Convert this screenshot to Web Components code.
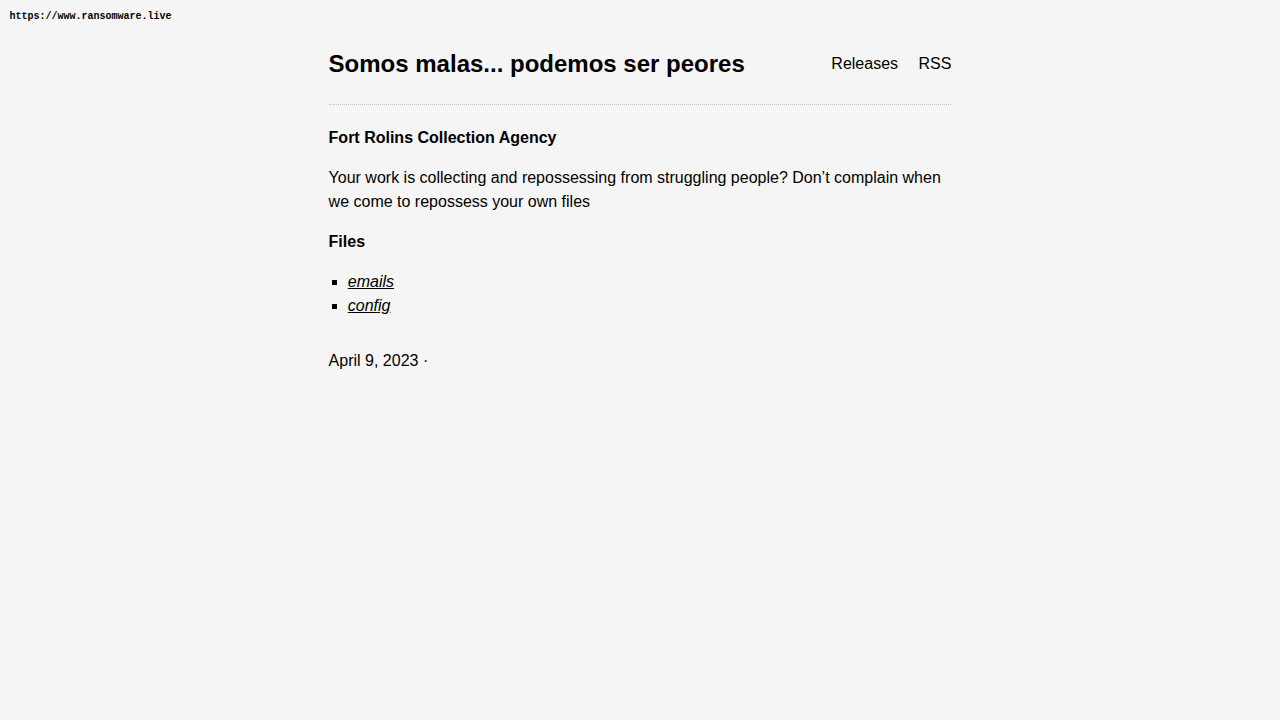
<!DOCTYPE html>
<html lang="en">
<head>
<meta charset="utf-8">
<title>Fort Rolins Collection Agency</title>
<style>
html,body{margin:0;background:#f5f5f5;color:#000}
body{font:16px/24px "Liberation Sans",Arial,sans-serif}
</style>
</head>
<body>
<source-mark>https://www.ransomware.live</source-mark>
<page-shell>
<site-header slot="header" heading="Somos malas... podemos ser peores"><nav-link>Releases</nav-link><nav-link>RSS</nav-link></site-header>
<release-post heading="Fort Rolins Collection Agency">Your work is collecting and repossessing from struggling people? Don’t complain when we come to repossess your own files<file-link slot="files">emails</file-link><file-link slot="files">config</file-link><span slot="date">April 9, 2023 ·</span></release-post>
</page-shell>
<script>
const define = (name, html) => customElements.define(name, class extends HTMLElement {
  constructor() {
    super();
    this.attachShadow({mode: 'open'}).innerHTML = html;
  }
  connectedCallback() {
    const h = this.shadowRoot.querySelector('[data-heading]');
    if (h) h.textContent = this.getAttribute('heading');
  }
});
define('source-mark', `<style>:host{position:absolute;left:9.5px;top:11px;font:bold 10px/12px "Liberation Mono",monospace;white-space:nowrap}</style><slot></slot>`);
define('page-shell', `<style>:host{display:block;box-sizing:border-box;width:622.8px;margin:0 auto;padding-top:40px}</style><slot name="header"></slot><slot></slot>`);
define('site-header', `<style>:host{display:flex;justify-content:space-between;align-items:center;height:64px;border-bottom:1px dotted #c4c4c4}
h1{margin:0 0 16px;font-size:24px;line-height:36px}nav{display:flex;gap:20.45px;margin-bottom:16px}</style><h1 data-heading></h1><nav><slot></slot></nav>`);
define('nav-link', `<style>:host{display:block}a{color:inherit;text-decoration:none}</style><a href="#"><slot></slot></a>`);
define('release-post', `<style>:host{display:block;padding-top:21px}p,ul{margin:0 0 16px}ul{padding:0 0 0 19.2px;list-style:square}footer{padding-top:15px}</style>
<p><strong data-heading></strong></p><p><slot></slot></p><p><strong>Files</strong></p><ul><slot name="files"></slot></ul><footer><slot name="date"></slot></footer>`);
define('file-link', `<style>:host{display:list-item}a{color:inherit;font-style:italic;text-decoration:underline}</style><a href="#"><slot></slot></a>`);
</script>
</body>
</html>
